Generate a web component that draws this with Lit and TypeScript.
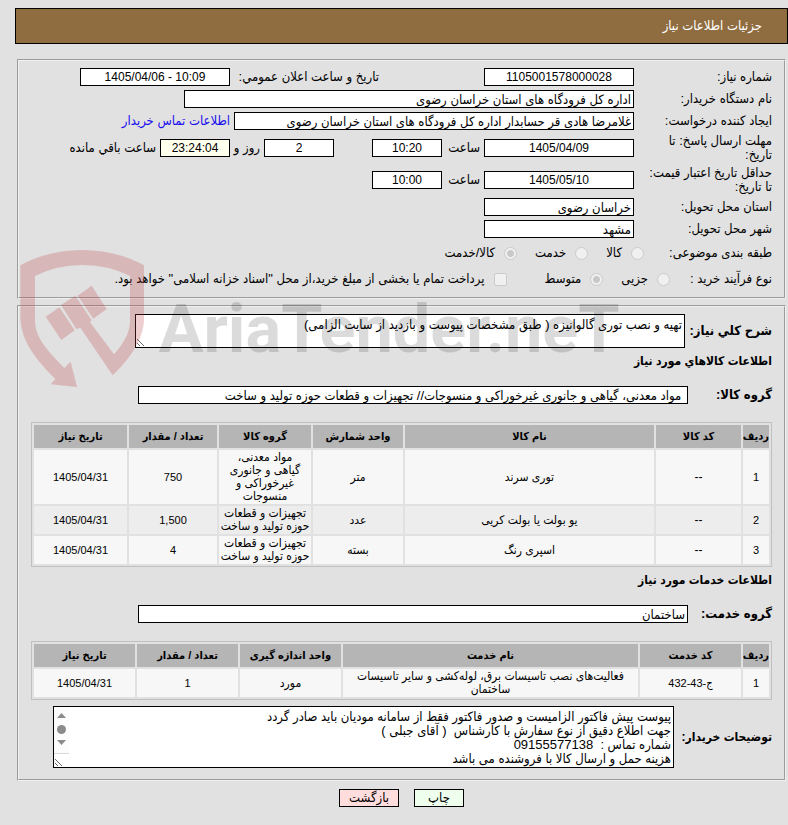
import { LitElement, html, css, svg } from "lit";
import { customElement } from "lit/decorators.js";

interface Column {
  title: string;
  width: string;
}

const goodsColumns: Column[] = [
  { title: "ردیف", width: "w-index" },
  { title: "کد کالا", width: "w-code" },
  { title: "نام کالا", width: "w-name" },
  { title: "واحد شمارش", width: "w-unit" },
  { title: "گروه کالا", width: "w-group" },
  { title: "تعداد / مقدار", width: "w-count" },
  { title: "تاریخ نیاز", width: "w-date" },
];

const goodsRows: string[][] = [
  ["1", "--", "توری سرند", "متر", "مواد معدنی،\nگیاهی و جانوری غیرخوراکی و منسوجات", "750", "1405/04/31"],
  ["2", "--", "یو بولت یا بولت کریی", "عدد", "تجهیزات و قطعات حوزه تولید و ساخت", "1,500", "1405/04/31"],
  ["3", "--", "اسپری رنگ", "بسته", "تجهیزات و قطعات حوزه تولید و ساخت", "4", "1405/04/31"],
];

const serviceColumns: Column[] = [
  { title: "ردیف", width: "w-index" },
  { title: "کد خدمت", width: "w-wide" },
  { title: "نام خدمت", width: "w-name" },
  { title: "واحد اندازه گیری", width: "w-wide" },
  { title: "تعداد / مقدار", width: "w-wide" },
  { title: "تاریخ نیاز", width: "w-wide" },
];

const serviceRows: string[][] = [
  ["1", "ج-43-432", "فعالیت‌های نصب تاسیسات برق، لوله‌کشی و سایر تاسیسات ساختمان", "مورد", "1", "1405/04/31"],
];

const buyerNotes = [
  "پیوست پیش فاکتور الزامیست و صدور فاکتور فقط از سامانه مودیان باید صادر گردد",
  "جهت اطلاع دقیق از نوع سفارش با کارشناس  ( آقای جبلی )",
  "شماره تماس :  09155577138",
  "هزینه حمل و ارسال کالا با فروشنده می باشد",
].join("\n");

const hasDigits = (value: string) => /\d/.test(value);

@customElement("data-grid")
export class DataGrid extends LitElement {
  static properties = {
    columns: { attribute: false },
    rows: { attribute: false },
  };

  declare columns: Column[];
  declare rows: string[][];

  static styles = css`
    :host {
      display: block;
    }
    table {
      width: 100%;
      table-layout: fixed;
      border: 1px solid #c0c0c0;
      border-collapse: separate;
      border-spacing: 2px;
      box-sizing: border-box;
      font-size: 12px;
      line-height: 13px;
    }
    th {
      height: 23px;
      padding: 0;
      box-sizing: border-box;
      background: #b5b5b5;
      font-weight: bold;
      font-size: 11px;
      white-space: nowrap;
    }
    td {
      padding: 1px 0;
      background: #f7f7f7;
      text-align: center;
      white-space: pre-line;
    }
    .num {
      font-size: 11px;
    }
    tr:nth-child(even) td {
      background: #ededed;
    }
    .w-index { width: 26px; }
    .w-code { width: 85px; }
    .w-unit { width: 90px; }
    .w-group { width: 92px; }
    .w-count { width: 88px; }
    .w-date { width: 93px; }
    .w-wide { width: 101px; }
  `;

  render() {
    return html`
      <table>
        <thead>
          <tr>
            ${this.columns.map((c) => html`<th scope="col" class=${c.width}>${c.title}</th>`)}
          </tr>
        </thead>
        <tbody>
          ${this.rows.map(
            (r) => html`<tr>${r.map((v) => html`<td class=${hasDigits(v) ? "num" : "word"}>${v}</td>`)}</tr>`,
          )}
        </tbody>
      </table>
    `;
  }
}

@customElement("app-root")
export class AppRoot extends LitElement {
  static styles = css`
    :host {
      display: block;
      position: relative;
      min-height: 100vh;
      box-sizing: border-box;
      padding: 8px 0 18px 15px;
      background: #e1e1e1;
      color: #000;
      direction: rtl;
      font: 13px/14px "Liberation Sans", "DejaVu Sans Condensed", "DejaVu Sans", sans-serif;
    }
    h1 {
      margin: 0 0 15px;
      padding: 10px 25px;
      border: 1px solid #000;
      background: #8f6d40;
      color: #fff;
      font-size: 13px;
      font-weight: normal;
      line-height: 14px;
    }
    fieldset {
      display: flex;
      flex-direction: column;
      gap: 4px;
      min-width: 0;
      margin: 0 2px 6px;
      padding: 7px 12px;
      border: 2px groove #f0f0f0;
    }
    .details {
      gap: 18px;
      margin-bottom: 8px;
      padding-bottom: 11px;
    }
    .pair {
      display: flex;
      flex-direction: column;
      gap: 6px;
    }
    .row {
      display: flex;
      align-items: center;
      gap: 4px;
    }
    .caption {
      width: 134px;
      flex: none;
    }
    .choices {
      height: 22px;
    }
    .choices .caption {
      width: 124px;
    }
    .purchase .caption {
      width: 98px;
    }
    .choices label {
      display: flex;
      align-items: center;
      gap: 9px;
      margin-left: 14px;
      white-space: nowrap;
    }
    .choices .tight {
      margin-left: 34px;
    }
    .spaced {
      margin-right: 101px;
      width: 145px;
      white-space: nowrap;
    }
    .hour {
      width: 34px;
    }
    .days {
      width: 26px;
      white-space: nowrap;
    }
    input[type="text"], textarea {
      box-sizing: border-box;
      border: 1px solid #000;
      border-radius: 0;
      background: #fff;
      color: #000;
      font: inherit;
      outline: none;
      min-width: 0;
      max-width: 100%;
    }
    input[type="text"] {
      height: 18px;
      padding: 1px 2px;
    }
    .w70 { width: 70px; }
    .w150 { width: 150px; }
    .w400 { width: 400px; }
    .w450 { width: 450px; }
    .w550 { width: 550px; }
    input.mid {
      text-align: center;
      font-size: 12px;
    }
    .gap { margin-right: 34px; }
    input.timer { background: #ffffee; }
    textarea {
      display: block;
      margin: 0;
      padding: 3px 2px;
      overflow: hidden;
      resize: both;
      white-space: pre-wrap;
    }
    .summary {
      width: 550px;
      height: 34px;
    }
    .notes {
      position: relative;
      width: 621px;
    }
    .notes textarea {
      width: 100%;
      height: 62px;
    }
    .scroller {
      position: absolute;
      left: 1px;
      top: 1px;
      width: 15px;
      height: 46px;
      border-bottom: 1px solid #d9d9d9;
      background: #fcfcfc;
    }
    .strong {
      flex: none;
      font-size: 13px;
      font-weight: bold;
      white-space: nowrap;
    }
    .strong-group { width: 80px; }
    .strong-summary { width: 83px; }
    .strong-notes {
      width: 94px;
      font-size: 12px;
    }
    h2 {
      margin: 0;
      font-size: 12px;
      line-height: 14px;
      font-weight: bold;
    }
    a {
      color: #1a0dee;
      text-decoration: none;
    }
    input[type="radio"], input[type="checkbox"] {
      appearance: none;
      flex: none;
      width: 13px;
      height: 13px;
      margin: 0;
      border: 1px solid #cbcbcb;
      background: #f0f0f0;
      border-radius: 2px;
    }
    input[type="radio"] {
      border-radius: 50%;
    }
    input[type="radio"]:checked {
      background: radial-gradient(circle, #c8c8c8 0 3px, #f0f0f0 4px);
    }
    .actions {
      display: flex;
      justify-content: center;
      gap: 15px;
    }
    button {
      width: 50px;
      height: 18px;
      padding: 0;
      border: 1px solid #000;
      border-radius: 0;
      font: inherit;
      color: #000;
      background: #eeffee;
    }
    .back {
      width: 60px;
      background: #ffdddd;
    }
    .watermark {
      position: absolute;
      left: 20px;
      top: 250px;
      pointer-events: none;
    }
    .wordmark {
      font: bold 200px Roboto, "Liberation Sans", sans-serif;
      direction: ltr;
    }
  `;

  private watermark() {
    return html`
      <svg class="watermark" width="610" height="138" viewBox="60 180 1830 414" aria-hidden="true">
        ${svg`
          <g fill="#be3d40" fill-opacity="0.25">
            <path d="M61 226 Q145 180 247 180 Q348 180 432 226 V390 C430 450 385 512 338 556 L241 413 L229 417 L183 345 L226 317 L275 391 L270 397 L342 493 C372 458 390 430 390 390 V258 Q325 225 247 225 Q170 225 105 258 V390 C105 440 135 474 193 534 L212 515 L231 591 L152 583 L166 567 C100 500 63 450 61 380 Z" />
            <path d="M137 380 L178 352 L224 421 L184 450 Z M233 317 L275 287 L320 357 L280 386 Z" />
          </g>
          <text class="wordmark" x="476" y="486" fill="#000" fill-opacity="0.14">AriaTender.neT</text>
        `}
      </svg>
    `;
  }

  render() {
    return html`
      <h1>جزئیات اطلاعات نیاز</h1>

      <fieldset>
        <div class="row">
          <label class="caption" for="number">شماره نیاز:</label>
          <input id="number" class="w150 mid" type="text" readonly value="1105001578000028" />
          <label class="spaced" for="announced">تاریخ و ساعت اعلان عمومي:</label>
          <input id="announced" class="w150 mid" type="text" dir="ltr" readonly value="1405/04/06 - 10:09" />
        </div>
        <div class="row">
          <label class="caption" for="buyer">نام دستگاه خریدار:</label>
          <input id="buyer" class="w450" type="text" readonly value="اداره کل فرودگاه های استان خراسان رضوی" />
        </div>
        <div class="row">
          <label class="caption" for="creator">ایجاد کننده درخواست:</label>
          <input id="creator" class="w400" type="text" readonly value="غلامرضا هادی قر حسابدار اداره کل فرودگاه های استان خراسان رضوی" />
          <a href="#contact">اطلاعات تماس خریدار</a>
        </div>
        <div class="row">
          <label class="caption" for="deadline">مهلت ارسال پاسخ: تا<br />تاریخ:</label>
          <input id="deadline" class="w150 mid" type="text" readonly value="1405/04/09" />
          <label class="hour" for="deadline-hour">ساعت</label>
          <input id="deadline-hour" class="w70 mid" type="text" readonly value="10:20" />
          <input id="days" class="w70 mid gap" type="text" readonly value="2" />
          <label class="days" for="days">روز و</label>
          <input id="remaining" class="w70 mid timer" type="text" readonly value="23:24:04" />
          <label for="remaining">ساعت باقي مانده</label>
        </div>
        <div class="row">
          <label class="caption" for="validity">حداقل تاریخ اعتبار قیمت:<br />تا تاریخ:</label>
          <input id="validity" class="w150 mid" type="text" readonly value="1405/05/10" />
          <label class="hour" for="validity-hour">ساعت</label>
          <input id="validity-hour" class="w70 mid" type="text" readonly value="10:00" />
        </div>
        <div class="row">
          <label class="caption" for="province">استان محل تحویل:</label>
          <input id="province" class="w150" type="text" readonly value="خراسان رضوی" />
        </div>
        <div class="row">
          <label class="caption" for="city">شهر محل تحویل:</label>
          <input id="city" class="w150" type="text" readonly value="مشهد" />
        </div>
        <div class="row choices">
          <span class="caption">طبقه بندی موضوعی:</span>
          <label><input type="radio" name="kind" disabled />کالا</label>
          <label><input type="radio" name="kind" disabled />خدمت</label>
          <label><input type="radio" name="kind" disabled checked />کالا/خدمت</label>
        </div>
        <div class="row choices purchase">
          <span class="caption">نوع فرآیند خرید :</span>
          <label><input type="radio" name="process" disabled />جزیی</label>
          <label class="tight"><input type="radio" name="process" disabled checked />متوسط</label>
          <label><input type="checkbox" disabled />پرداخت تمام یا بخشی از مبلغ خرید،از محل "اسناد خزانه اسلامی" خواهد بود.</label>
        </div>
      </fieldset>

      <fieldset class="details">
        <div class="pair">
          <div class="row">
            <label class="strong strong-summary" for="summary">شرح کلي نیاز:</label>
            <textarea id="summary" class="summary" readonly .value=${"تهیه و نصب توری گالوانیزه ( طبق مشخصات پیوست و بازدید از سایت الزامی)"}></textarea>
          </div>
          <h2>اطلاعات کالاهاي مورد نیاز</h2>
        </div>
        <div class="row">
          <label class="strong strong-group" for="goods-group">گروه کالا:</label>
          <input id="goods-group" class="w550" type="text" readonly value=" مواد معدنی، گیاهی و جانوری غیرخوراکی و منسوجات// تجهیزات و قطعات حوزه تولید و ساخت" />
        </div>
        <div class="pair">
          <data-grid .columns=${goodsColumns} .rows=${goodsRows}></data-grid>
          <h2>اطلاعات خدمات مورد نیاز</h2>
        </div>
        <div class="row">
          <label class="strong strong-group" for="service-group">گروه خدمت:</label>
          <input id="service-group" class="w550" type="text" readonly value="ساختمان" />
        </div>
        <div class="pair">
          <data-grid .columns=${serviceColumns} .rows=${serviceRows}></data-grid>
          <div class="row">
            <label class="strong strong-notes" for="notes">توضیحات خریدار:</label>
            <div class="notes">
              <textarea id="notes" readonly .value=${buyerNotes}></textarea>
              <svg class="scroller" viewBox="0 0 15 46" aria-hidden="true">
                <path d="M3 11 L7.5 6 L12 11 Z M3 33 L7.5 38 L12 33 Z" fill="#8b8b8b" />
                <circle cx="7.5" cy="22.500" r="4.500" fill="#8b8b8b" />
              </svg>
            </div>
          </div>
        </div>
      </fieldset>

      <div class="actions">
        <button type="button">چاپ</button>
        <button type="button" class="back">بازگشت</button>
      </div>

      ${this.watermark()}
    `;
  }
}
